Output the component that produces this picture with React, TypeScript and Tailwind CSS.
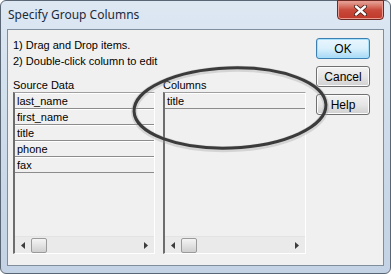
import React from "react";

const ui = { fontFamily: '"Liberation Sans", Arial, sans-serif' };
const title = { fontFamily: '"Noto Sans", "Open Sans", sans-serif' };

const sourceItems = ["last_name", "first_name", "title", "phone", "fax"];
const columnItems = ["title"];

function ArrowLeft() {
  return (
    <svg width="4" height="7" viewBox="0 0 4 7">
      <path d="M4 0 L0 3.5 L4 7 Z" fill="#3c3c3c" />
    </svg>
  );
}

function ArrowRight() {
  return (
    <svg width="4" height="7" viewBox="0 0 4 7">
      <path d="M0 0 L4 3.5 L0 7 Z" fill="#3c3c3c" />
    </svg>
  );
}

function HScroll() {
  return (
    <div className="flex h-[17px] items-center border-t border-[#e3e3e3] bg-[#eaeaea] px-[6px]">
      <ArrowLeft />
      <div className="ml-[6px] h-[15px] w-[16px] rounded-[2px] border border-[#9a9a9a] bg-gradient-to-b from-[#f4f4f4] via-[#e2e2e2] to-[#cfcfcf]" />
      <div className="flex-1" />
      <ArrowRight />
    </div>
  );
}

function ListBox({ items, width }: { items: string[]; width: string }) {
  return (
    <div
      className={`flex h-[162px] flex-col border-l-2 border-t border-b border-r border-l-[#6d6d6d] border-t-[#a0a0a0] border-r-[#ffffff] border-b-[#ffffff] bg-[#f0f0f0] ${width}`}
    >
      <div className="flex-1">
        {items.map((item) => (
          <div
            key={item}
            className="flex h-[16px] items-center border-t border-b border-t-[#ffffff] border-b-[#8c8c8c] pl-[2px] text-[11px] leading-none text-black"
          >
            {item}
          </div>
        ))}
      </div>
      <HScroll />
    </div>
  );
}

function Button({ label, primary }: { label: string; primary?: boolean }) {
  return (
    <button
      className={
        primary
          ? "flex h-[21px] w-[54px] items-center justify-center rounded-[3px] border border-[#3c7fb1] bg-gradient-to-b from-[#eaf6fd] via-[#d9f0fc] to-[#a7d9f5] text-[12px] text-black shadow-[inset_0_0_0_1px_#a6e0fb]"
          : "flex h-[21px] w-[54px] items-center justify-center rounded-[3px] border border-[#707070] bg-gradient-to-b from-[#f2f2f2] via-[#e6e6e6] to-[#d0d0d0] text-[12px] text-black shadow-[inset_0_0_0_1px_#fcfcfc]"
      }
    >
      {label}
    </button>
  );
}

export default function App() {
  return (
    <div className="relative h-[274px] w-[391px] overflow-hidden bg-white">
      <div className="flex h-[274px] w-[391px] flex-col rounded-[6px] border border-[#5a6674] bg-gradient-to-b from-[#dde8f3] via-[#cddbea] to-[#c3d3e5]">
        {/* title bar */}
        <div className="relative flex h-[28px] items-center pl-[7px]">
          <span style={title} className="text-[12px] text-[#1b2a3a]">
            Specify Group Columns
          </span>
          <div className="absolute right-[6px] top-[-1px] flex h-[20px] w-[47px] items-center justify-center rounded-b-[4px] border border-[#6b2a24] bg-gradient-to-b from-[#e5a79d] via-[#c9493a] to-[#c0392b] shadow-[inset_0_0_0_1px_#eb9a8f]">
            <svg width="13" height="11" viewBox="0 0 13 11">
              <path
                d="M2 1.5 L11 9.5 M11 1.5 L2 9.5"
                stroke="#3a1a16"
                strokeWidth="4"
                strokeLinecap="round"
              />
              <path
                d="M2 1.5 L11 9.5 M11 1.5 L2 9.5"
                stroke="#ffffff"
                strokeWidth="2.4"
                strokeLinecap="round"
              />
            </svg>
          </div>
        </div>

        {/* client area */}
        <div
          style={ui}
          className="mx-[6px] flex h-[237px] border border-[#7f8d9c] bg-[#f0f0f0] text-[11px] text-black"
        >
          <div className="flex w-[300px] flex-col pl-[5px] pt-[7px]">
            <div className="leading-[16px]">1) Drag and Drop items.</div>
            <div className="leading-[16px]">2) Double-click column to edit</div>
            <div className="mt-[10px] flex gap-[8px] leading-[13px]">
              <div className="w-[142px]">Source Data</div>
              <div>Columns</div>
            </div>
            <div className="flex gap-[8px]">
              <ListBox items={sourceItems} width="w-[142px]" />
              <ListBox items={columnItems} width="w-[143px]" />
            </div>
          </div>
          <div className="flex flex-col gap-[7px] pl-[8px] pt-[8px]">
            <Button label="OK" primary />
            <Button label="Cancel" />
            <Button label="Help" />
          </div>
        </div>
      </div>

      {/* hand-drawn highlight around the Columns list */}
      <svg
        className="pointer-events-none absolute left-0 top-0"
        width="391"
        height="274"
        viewBox="0 0 391 274"
      >
        <ellipse
          cx="230"
          cy="109"
          rx="96"
          ry="40"
          transform="rotate(-2 230 109)"
          fill="none"
          stroke="#a0a0a0"
          strokeWidth="6"
          opacity="0.35"
        />
        <ellipse
          cx="230"
          cy="108"
          rx="96"
          ry="40"
          transform="rotate(-2 230 108)"
          fill="none"
          stroke="#3b3b3b"
          strokeWidth="3"
        />
      </svg>
    </div>
  );
}
